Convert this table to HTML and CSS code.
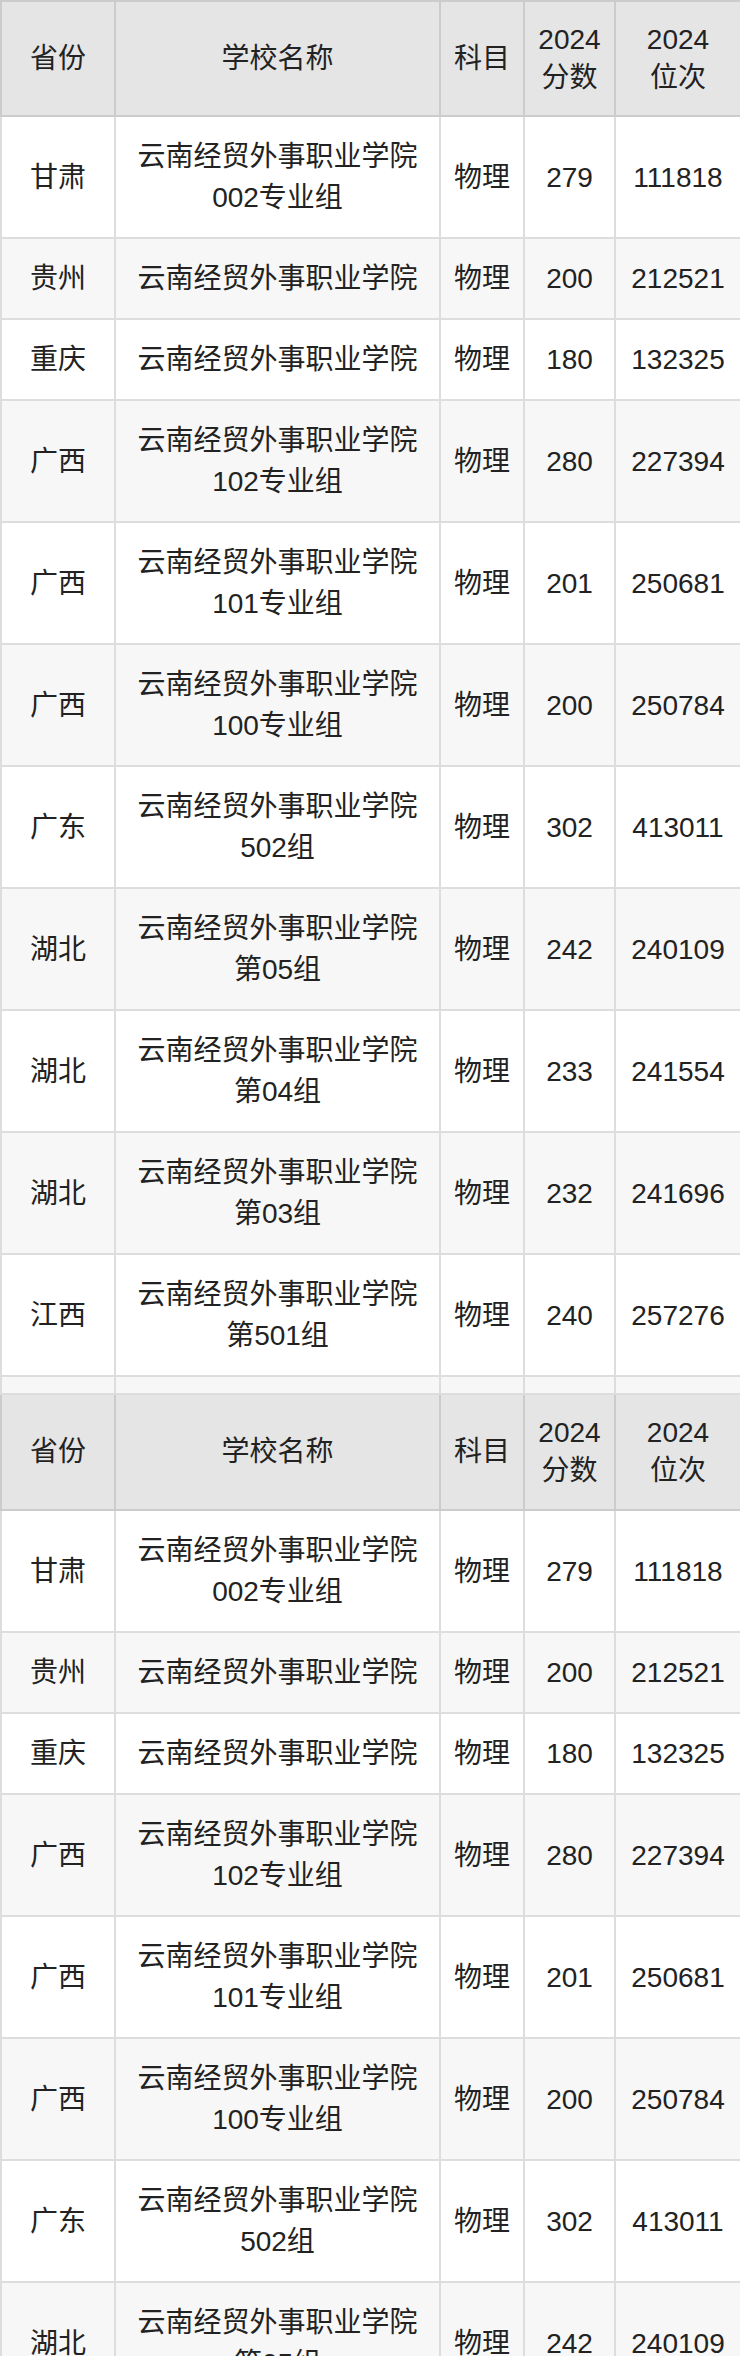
FILE: index.html
```html
<!DOCTYPE html>
<html lang="zh-CN">
<head>
<meta charset="utf-8">
<title>云南经贸外事职业学院 2024 分数线</title>
<link rel="stylesheet" href="styles.css">
</head>
<body>
<table class="score-table">
  <colgroup>
    <col class="c-prov">
    <col class="c-school">
    <col class="c-subj">
    <col class="c-score">
    <col class="c-rank">
  </colgroup>
  <thead>
    <tr class="head-row">
      <th>省份</th><th>学校名称</th><th>科目</th><th>2024<br>分数</th><th>2024<br>位次</th>
    </tr>
  </thead>
  <tbody class="data">
    <tr><td>甘肃</td><td>云南经贸外事职业学院002专业组</td><td>物理</td><td>279</td><td>111818</td></tr>
    <tr><td>贵州</td><td>云南经贸外事职业学院</td><td>物理</td><td>200</td><td>212521</td></tr>
    <tr><td>重庆</td><td>云南经贸外事职业学院</td><td>物理</td><td>180</td><td>132325</td></tr>
    <tr><td>广西</td><td>云南经贸外事职业学院102专业组</td><td>物理</td><td>280</td><td>227394</td></tr>
    <tr><td>广西</td><td>云南经贸外事职业学院101专业组</td><td>物理</td><td>201</td><td>250681</td></tr>
    <tr><td>广西</td><td>云南经贸外事职业学院100专业组</td><td>物理</td><td>200</td><td>250784</td></tr>
    <tr><td>广东</td><td>云南经贸外事职业学院502组</td><td>物理</td><td>302</td><td>413011</td></tr>
    <tr><td>湖北</td><td>云南经贸外事职业学院第05组</td><td>物理</td><td>242</td><td>240109</td></tr>
    <tr><td>湖北</td><td>云南经贸外事职业学院第04组</td><td>物理</td><td>233</td><td>241554</td></tr>
    <tr><td>湖北</td><td>云南经贸外事职业学院第03组</td><td>物理</td><td>232</td><td>241696</td></tr>
    <tr><td>江西</td><td>云南经贸外事职业学院第501组</td><td>物理</td><td>240</td><td>257276</td></tr>
    <tr class="empty-row"><td></td><td></td><td></td><td></td><td></td></tr>
  </tbody>
  <tbody class="rehead">
    <tr class="head-row">
      <th>省份</th><th>学校名称</th><th>科目</th><th>2024<br>分数</th><th>2024<br>位次</th>
    </tr>
  </tbody>
  <tbody class="data">
    <tr><td>甘肃</td><td>云南经贸外事职业学院002专业组</td><td>物理</td><td>279</td><td>111818</td></tr>
    <tr><td>贵州</td><td>云南经贸外事职业学院</td><td>物理</td><td>200</td><td>212521</td></tr>
    <tr><td>重庆</td><td>云南经贸外事职业学院</td><td>物理</td><td>180</td><td>132325</td></tr>
    <tr><td>广西</td><td>云南经贸外事职业学院102专业组</td><td>物理</td><td>280</td><td>227394</td></tr>
    <tr><td>广西</td><td>云南经贸外事职业学院101专业组</td><td>物理</td><td>201</td><td>250681</td></tr>
    <tr><td>广西</td><td>云南经贸外事职业学院100专业组</td><td>物理</td><td>200</td><td>250784</td></tr>
    <tr><td>广东</td><td>云南经贸外事职业学院502组</td><td>物理</td><td>302</td><td>413011</td></tr>
    <tr><td>湖北</td><td>云南经贸外事职业学院第05组</td><td>物理</td><td>242</td><td>240109</td></tr>
    <tr><td>湖北</td><td>云南经贸外事职业学院第04组</td><td>物理</td><td>233</td><td>241554</td></tr>
    <tr><td>湖北</td><td>云南经贸外事职业学院第03组</td><td>物理</td><td>232</td><td>241696</td></tr>
    <tr><td>江西</td><td>云南经贸外事职业学院第501组</td><td>物理</td><td>240</td><td>257276</td></tr>
  </tbody>
</table>
</body>
</html>
```

FILE: styles.css
```css
html, body {
  margin: 0;
  padding: 0;
  background: #ffffff;
}

body {
  font-family: "Liberation Sans", "Noto Sans CJK SC", sans-serif;
  color: #222222;
}

.score-table {
  width: 740px;
  table-layout: fixed;
  border-collapse: collapse;
  font-size: 28px;
}

.c-prov { width: 114px; }
.c-school { width: 325px; }
.c-subj { width: 84px; }
.c-score { width: 91px; }
.c-rank { width: 126px; }

.score-table th,
.score-table td {
  text-align: center;
  vertical-align: middle;
}

.head-row th {
  background: #e5e5e5;
  border: 2px solid #cccccc;
  font-weight: normal;
  line-height: 38px;
  padding: 19px 4px 18px;
}

.data td {
  border: 2px solid #dddddd;
  line-height: 41px;
  padding: 19px 10px;
  background: #ffffff;
}

.data tr:nth-child(even) td {
  background: #f7f7f7;
}

.data .empty-row td {
  height: 16px;
  padding: 0;
  line-height: 0;
}

.rehead .head-row th {
  padding-bottom: 19px;
}
```
